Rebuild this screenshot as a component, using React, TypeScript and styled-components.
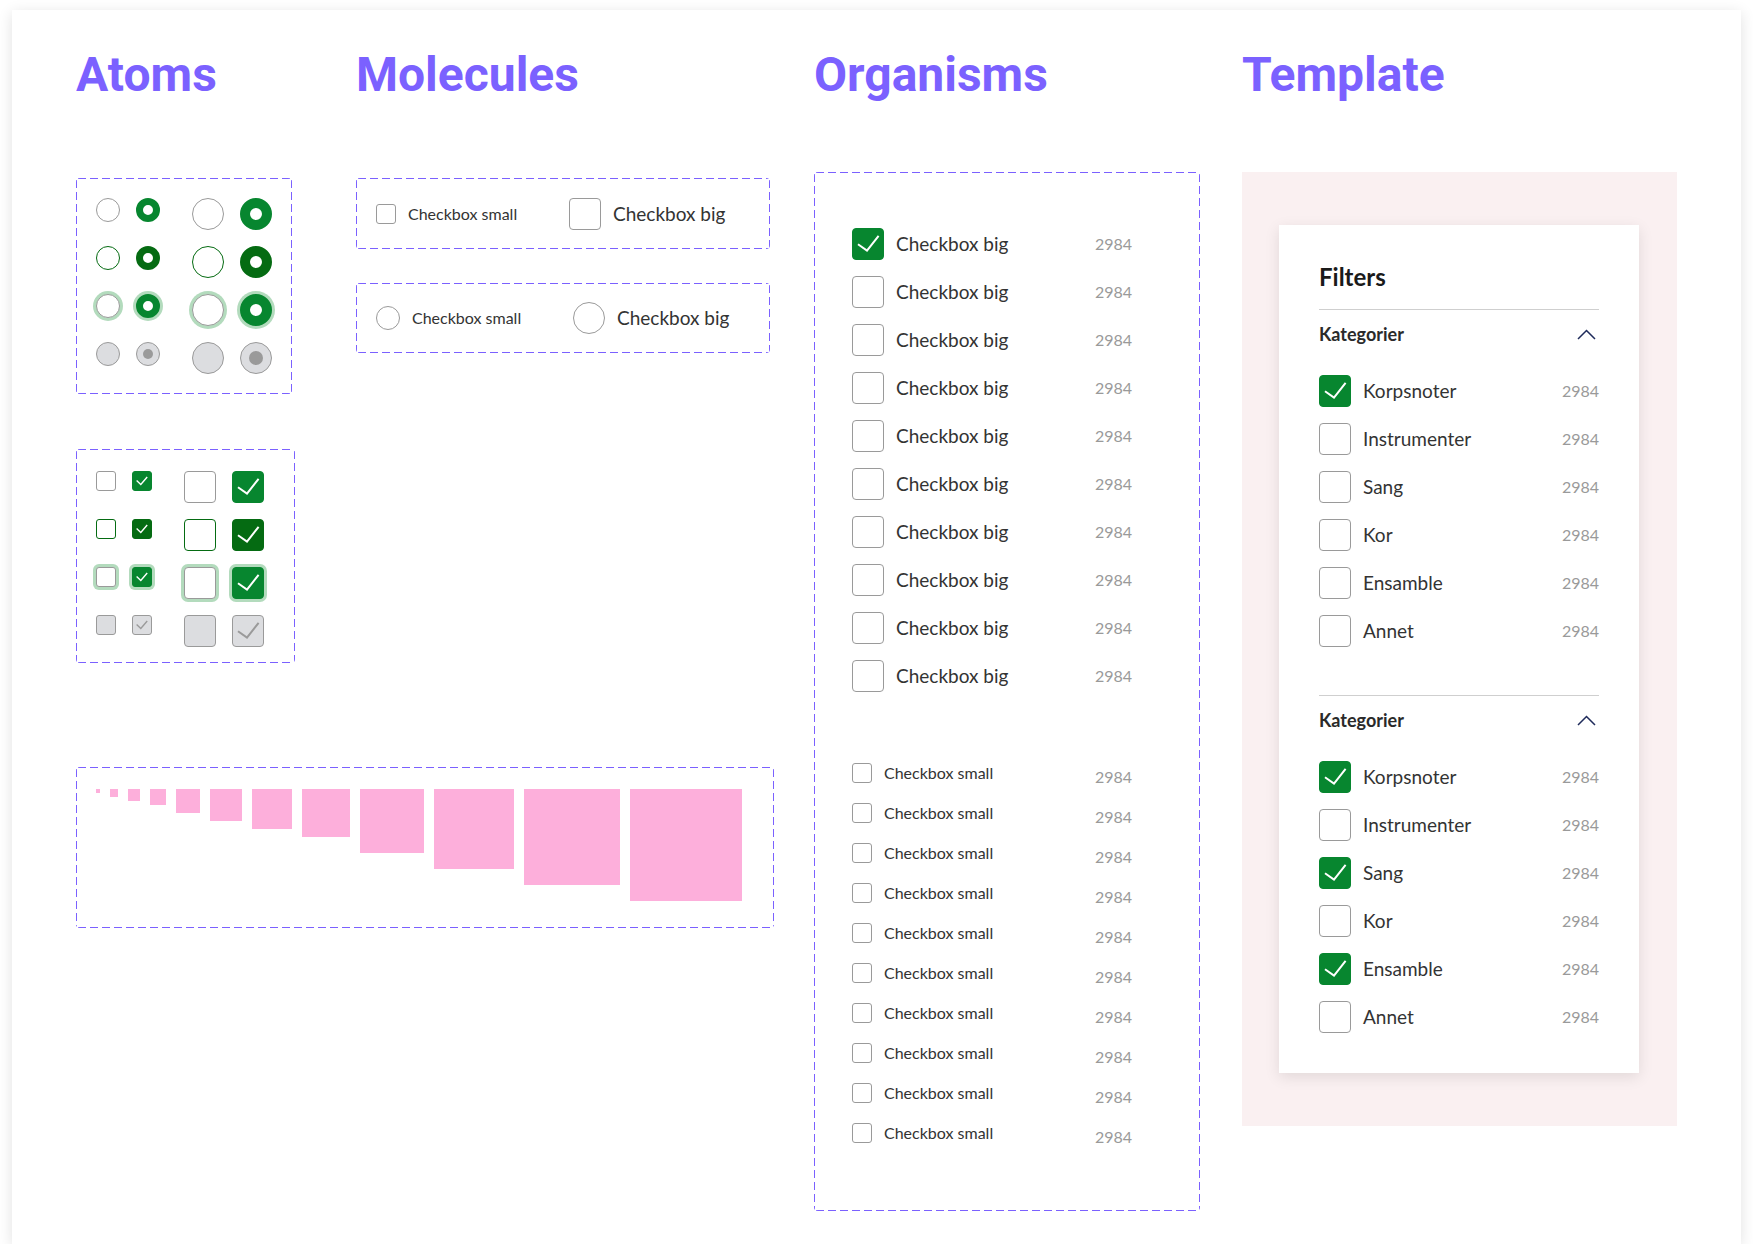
import React from 'react'
import styled, { createGlobalStyle, css } from 'styled-components'

type Size = 'sm' | 'lg'
type State = 'default' | 'hover' | 'focus' | 'disabled'

const PURPLE = '#7b61ff'
const GREEN = '#07862f'
const GREEN_DARK = '#056b12'
const GRAY = '#9a9a9a'
const DISABLED_BG = '#dcdde0'
const GLOW = '#b3dbbd'

const GlobalStyle = createGlobalStyle`
    * { box-sizing: border-box; }
    body {
        margin: 0;
        background: #ffffff;
        font-family: Lato, 'Noto Sans', sans-serif;
        color: #333333;
    }
`

const dashed = css`
    border-radius: 4px;
    background:
        linear-gradient(90deg, ${PURPLE} 8px, transparent 8px) 2px 0 / 12px 1px repeat-x,
        linear-gradient(90deg, ${PURPLE} 8px, transparent 8px) 2px 100% / 12px 1px repeat-x,
        linear-gradient(180deg, ${PURPLE} 8px, transparent 8px) 0 2px / 1px 12px repeat-y,
        linear-gradient(180deg, ${PURPLE} 8px, transparent 8px) 100% 2px / 1px 12px repeat-y;
`

const Frame = styled.main`
    width: 1729px;
    height: 1234px;
    margin: 10px 0 0 12px;
    padding: 37px 0 0 64px;
    background: #ffffff;
    box-shadow: 0 3px 14px rgba(0, 0, 0, 0.12);
    display: flex;
    align-items: flex-start;
`

const Heading = styled.h1`
    margin: 0 0 69px;
    height: 56px;
    font-family: Roboto, 'Liberation Sans', sans-serif;
    font-weight: 700;
    font-size: 48px;
    line-height: 56px;
    color: ${PURPLE};
`

const LeftGroup = styled.div`
    width: 738px;
    display: flex;
    flex-direction: column;
`

const TopRow = styled.div`
    display: flex;
    align-items: flex-start;
`

const Column = styled.section<{ $width: number }>`
    width: ${p => p.$width}px;
    display: flex;
    flex-direction: column;
    align-items: flex-start;
    flex: none;
`

/* ---------- atoms ---------- */

const RadioBoard = styled.div`
    ${dashed};
    margin-top: 6px;
    width: 216px;
    padding: 20px;
    display: flex;
    flex-direction: column;
    gap: 16px;
`

const CheckBoard = styled.div`
    ${dashed};
    margin-top: 55px;
    width: 219px;
    padding: 22px 0 16px 20px;
    display: flex;
    flex-direction: column;
    gap: 16px;
`

const StateRow = styled.div`
    display: flex;
    align-items: flex-start;
    gap: 32px;
`

const Pair = styled.div`
    display: flex;
    align-items: flex-start;
    gap: 16px;
`

interface ControlProps {
    $size: Size
    $state?: State
    $checked?: boolean
}

const ringWidth = (p: ControlProps) => (p.$size === 'sm' ? 7 : 10)

const radioBorder = (p: ControlProps) => {
    const s = p.$state || 'default'
    if (s === 'disabled') return `1px solid ${GRAY}`
    if (p.$checked) return `${ringWidth(p)}px solid ${s === 'hover' ? GREEN_DARK : GREEN}`
    return `1px solid ${s === 'hover' ? GREEN_DARK : GRAY}`
}

const Radio = styled.span<ControlProps>`
    position: relative;
    flex: none;
    display: inline-block;
    width: ${p => (p.$size === 'sm' ? 24 : 32)}px;
    height: ${p => (p.$size === 'sm' ? 24 : 32)}px;
    border-radius: 50%;
    background: ${p => (p.$state === 'disabled' ? DISABLED_BG : '#ffffff')};
    border: ${radioBorder};
    box-shadow: ${p => (p.$state === 'focus' ? `0 0 0 3px ${GLOW}` : 'none')};

    &::after {
        content: '';
        display: ${p => (p.$state === 'disabled' && p.$checked ? 'block' : 'none')};
        position: absolute;
        left: 50%;
        top: 50%;
        width: ${p => (p.$size === 'sm' ? 10 : 14)}px;
        height: ${p => (p.$size === 'sm' ? 10 : 14)}px;
        margin: ${p => (p.$size === 'sm' ? -5 : -7)}px 0 0 ${p => (p.$size === 'sm' ? -5 : -7)}px;
        border-radius: 50%;
        background: ${GRAY};
    }
`

const boxFill = (p: ControlProps) => {
    const s = p.$state || 'default'
    if (s === 'disabled') return DISABLED_BG
    if (p.$checked) return s === 'hover' ? GREEN_DARK : GREEN
    return '#ffffff'
}

const boxLine = (p: ControlProps) => {
    const s = p.$state || 'default'
    if (s === 'disabled') return GRAY
    if (p.$checked) return s === 'hover' ? GREEN_DARK : GREEN
    return s === 'hover' ? GREEN_DARK : GRAY
}

const BoxShell = styled.span<ControlProps>`
    flex: none;
    display: inline-flex;
    width: ${p => (p.$size === 'sm' ? 20 : 32)}px;
    height: ${p => (p.$size === 'sm' ? 20 : 32)}px;
    border-radius: ${p => (p.$size === 'sm' ? 3 : 4)}px;
    background: ${boxFill};
    border: 1px solid ${boxLine};
    box-shadow: ${p => (p.$state === 'focus' ? `0 0 0 3px ${GLOW}` : 'none')};

    svg {
        width: 100%;
        height: 100%;
        display: block;
    }
`

const Checkbox = ({ size, state = 'default', checked = false }: { size: Size; state?: State; checked?: boolean }) => {
    const stroke = state === 'disabled' ? GRAY : '#ffffff'
    return (
        <BoxShell $size={ size } $state={ state } $checked={ checked }>
            { checked && (size === 'lg'
                ? <svg viewBox="0 0 30 30"><polyline points="5,15.2 14,21.6 25.6,6.8" fill="none" stroke={ stroke } strokeWidth="2" /></svg>
                : <svg viewBox="0 0 18 18"><polyline points="3.6,8.6 7.8,12.4 14.2,5" fill="none" stroke={ stroke } strokeWidth="1.4" /></svg>
            ) }
        </BoxShell>
    )
}

const states: State[] = ['default', 'hover', 'focus', 'disabled']

/* ---------- molecules ---------- */

const MoleculeBox = styled.div<{ $first?: boolean; $cols: string }>`
    ${dashed};
    margin-top: ${p => (p.$first ? 6 : 34)}px;
    width: 414px;
    height: ${p => (p.$first ? 71 : 70)}px;
    padding-left: 20px;
    display: grid;
    grid-template-columns: ${p => p.$cols};
    align-items: center;
`

const Option = styled.label`
    display: flex;
    align-items: center;
    gap: 12px;
`

const Label = styled.span<{ $big?: boolean }>`
    font-size: ${p => (p.$big ? 19 : 16)}px;
    line-height: 24px;
    color: #333333;
    white-space: nowrap;
`

/* ---------- sizes ---------- */

const SizeBoard = styled.div`
    ${dashed};
    margin-top: 104px;
    width: 698px;
    height: 161px;
    padding: 22px 0 0 20px;
    display: flex;
    align-items: flex-start;
    gap: 10px;
`

const Swatch = styled.span<{ $px: number }>`
    flex: none;
    width: ${p => p.$px}px;
    height: ${p => p.$px}px;
    background: #fdafdb;
`

const sizes = [4, 8, 12, 16, 24, 32, 40, 48, 64, 80, 96, 112]

/* ---------- organisms ---------- */

const OrganismBoard = styled.div`
    ${dashed};
    width: 386px;
    height: 1039px;
    padding: 56px 0 0 38px;
`

const List = styled.div<{ $gap: number; $top?: number }>`
    display: flex;
    flex-direction: column;
    gap: ${p => p.$gap}px;
    margin-top: ${p => p.$top || 0}px;
`

const ListRow = styled.div<{ $h: number }>`
    width: 280px;
    height: ${p => p.$h}px;
    display: flex;
    align-items: center;
    gap: 12px;
`

const Count = styled.span<{ $drop?: number }>`
    margin-left: auto;
    margin-top: ${p => p.$drop || 0}px;
    font-size: 16px;
    line-height: 20px;
    color: ${GRAY};
`

/* ---------- template ---------- */

const Backdrop = styled.div`
    width: 435px;
    height: 954px;
    background: #faf0f1;
    padding: 53px 0 0 37px;
`

const FilterCard = styled.aside`
    width: 360px;
    padding: 40px;
    background: #ffffff;
    box-shadow: 0 4px 14px rgba(0, 0, 0, 0.1);
`

const FilterTitle = styled.h2`
    margin: 0 0 20px;
    font-size: 24px;
    line-height: 24px;
    font-weight: 700;
    color: #1a1a1a;
`

const FilterSection = styled.div`
    border-top: 1px solid #cfcfcf;
    & + & {
        margin-top: 48px;
    }
`

const SectionHead = styled.div`
    height: 48px;
    display: flex;
    align-items: center;
    justify-content: space-between;
    font-size: 18px;
    line-height: 24px;
    font-weight: 700;
    color: #2a2a2a;

    svg {
        margin-right: 3px;
    }
`

const Chevron = () =>
    <svg width="19" height="11" viewBox="0 0 19 11">
        <polyline points="1,10 9.5,1.5 18,10" fill="none" stroke="#1f2b5b" strokeWidth="1.5" />
    </svg>

const categories = ['Korpsnoter', 'Instrumenter', 'Sang', 'Kor', 'Ensamble', 'Annet']

const Filters = ({ checked }: { checked: string[] }) =>
    <FilterSection>
        <SectionHead>Kategorier<Chevron /></SectionHead>
        <List $gap={ 16 } $top={ 17 }>
            { categories.map(c =>
                <ListRow $h={ 32 } key={ c }>
                    <Checkbox size="lg" checked={ checked.includes(c) } />
                    <Label $big>{ c }</Label>
                    <Count>2984</Count>
                </ListRow>
            ) }
        </List>
    </FilterSection>

const ten = Array.from({ length: 10 }, (_, i) => i)

const App = () =>
    <>
        <GlobalStyle />
        <Frame>
            <LeftGroup>
                <TopRow>
                    <Column $width={ 280 }>
                        <Heading>Atoms</Heading>
                        <RadioBoard>
                            { states.map(s =>
                                <StateRow key={ s }>
                                    <Pair>
                                        <Radio $size="sm" $state={ s } />
                                        <Radio $size="sm" $state={ s } $checked />
                                    </Pair>
                                    <Pair>
                                        <Radio $size="lg" $state={ s } />
                                        <Radio $size="lg" $state={ s } $checked />
                                    </Pair>
                                </StateRow>
                            ) }
                        </RadioBoard>
                        <CheckBoard>
                            { states.map(s =>
                                <StateRow key={ s }>
                                    <Pair>
                                        <Checkbox size="sm" state={ s } />
                                        <Checkbox size="sm" state={ s } checked />
                                    </Pair>
                                    <Pair>
                                        <Checkbox size="lg" state={ s } />
                                        <Checkbox size="lg" state={ s } checked />
                                    </Pair>
                                </StateRow>
                            ) }
                        </CheckBoard>
                    </Column>
                    <Column $width={ 458 }>
                        <Heading>Molecules</Heading>
                        <MoleculeBox $first $cols="193px auto">
                            <Option><Checkbox size="sm" /><Label>Checkbox small</Label></Option>
                            <Option><Checkbox size="lg" /><Label $big>Checkbox big</Label></Option>
                        </MoleculeBox>
                        <MoleculeBox $cols="197px auto">
                            <Option><Radio $size="sm" /><Label>Checkbox small</Label></Option>
                            <Option><Radio $size="lg" /><Label $big>Checkbox big</Label></Option>
                        </MoleculeBox>
                    </Column>
                </TopRow>
                <SizeBoard>
                    { sizes.map(s => <Swatch $px={ s } key={ s } />) }
                </SizeBoard>
            </LeftGroup>

            <Column $width={ 428 }>
                <Heading>Organisms</Heading>
                <OrganismBoard>
                    <List $gap={ 16 }>
                        { ten.map(i =>
                            <ListRow $h={ 32 } key={ i }>
                                <Checkbox size="lg" checked={ i === 0 } />
                                <Label $big>Checkbox big</Label>
                                <Count>2984</Count>
                            </ListRow>
                        ) }
                    </List>
                    <List $gap={ 20 } $top={ 71 }>
                        { ten.map(i =>
                            <ListRow $h={ 20 } key={ i }>
                                <Checkbox size="sm" />
                                <Label>Checkbox small</Label>
                                <Count $drop={ 8 }>2984</Count>
                            </ListRow>
                        ) }
                    </List>
                </OrganismBoard>
            </Column>

            <Column $width={ 435 }>
                <Heading>Template</Heading>
                <Backdrop>
                    <FilterCard>
                        <FilterTitle>Filters</FilterTitle>
                        <Filters checked={ ['Korpsnoter'] } />
                        <Filters checked={ ['Korpsnoter', 'Sang', 'Ensamble'] } />
                    </FilterCard>
                </Backdrop>
            </Column>
        </Frame>
    </>

export default App
